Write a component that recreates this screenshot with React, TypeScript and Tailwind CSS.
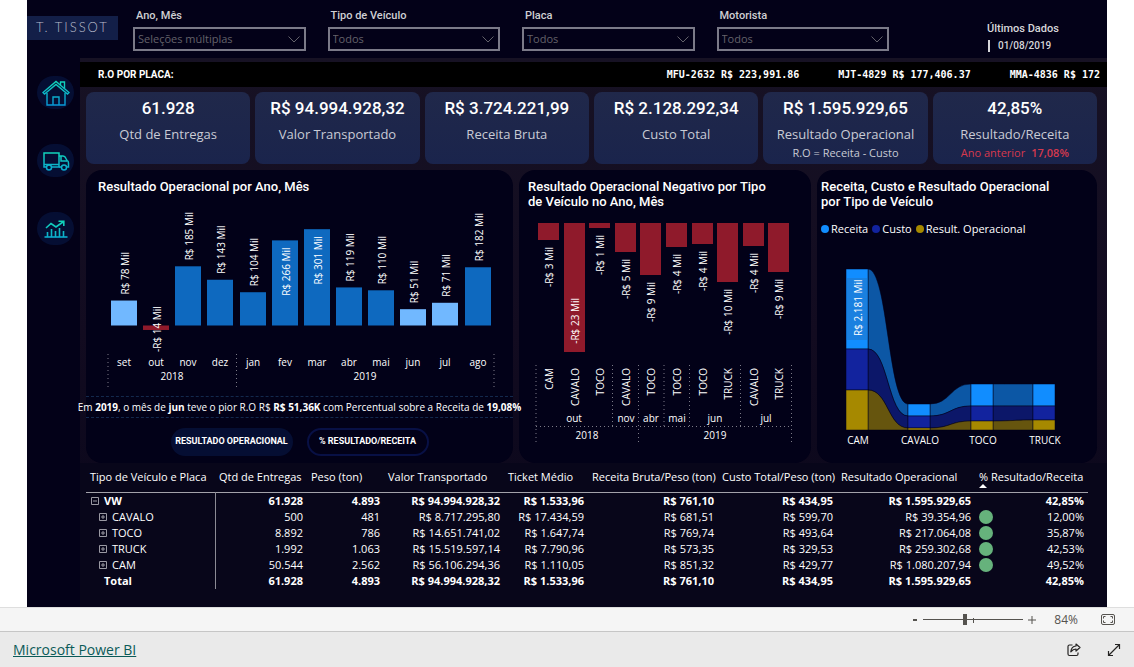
import React from 'react';

const filters = [
    { id: 'ano-mes', label: 'Ano, Mês', value: 'Seleções múltiplas' },
    { id: 'tipo', label: 'Tipo de Veículo', value: 'Todos' },
    { id: 'placa', label: 'Placa', value: 'Todos' },
    { id: 'motorista', label: 'Motorista', value: 'Todos' },
];

const ticker = ['MFU-2632 R$ 223,991.86', 'MJT-4829 R$ 177,406.37', 'MMA-4836 R$ 172'];

const kpis = [
    { value: '61.928', label: 'Qtd de Entregas' },
    { value: 'R$ 94.994.928,32', label: 'Valor Transportado' },
    { value: 'R$ 3.724.221,99', label: 'Receita Bruta' },
    { value: 'R$ 2.128.292,34', label: 'Custo Total' },
    { value: 'R$ 1.595.929,65', label: 'Resultado Operacional', note: 'R.O = Receita - Custo' },
    { value: '42,85%', label: 'Resultado/Receita', alert: 'Ano anterior', alertValue: '17,08%' },
];

const months = [
    { name: 'set', value: 78 },
    { name: 'out', value: -14 },
    { name: 'nov', value: 185 },
    { name: 'dez', value: 143 },
    { name: 'jan', value: 104 },
    { name: 'fev', value: 266 },
    { name: 'mar', value: 301 },
    { name: 'abr', value: 119 },
    { name: 'mai', value: 110 },
    { name: 'jun', value: 51 },
    { name: 'jul', value: 71 },
    { name: 'ago', value: 182 },
];

const negatives = [
    { type: 'CAM', value: 3, h: 17 },
    { type: 'CAVALO', value: 23, h: 129 },
    { type: 'TOCO', value: 1, h: 5 },
    { type: 'CAVALO', value: 5, h: 29 },
    { type: 'TOCO', value: 9, h: 52 },
    { type: 'TOCO', value: 4, h: 24 },
    { type: 'TOCO', value: 4, h: 21 },
    { type: 'TRUCK', value: 10, h: 59 },
    { type: 'CAVALO', value: 4, h: 23 },
    { type: 'TRUCK', value: 9, h: 49 },
];

const negativeMonths = [
    { name: 'out', x: 55 },
    { name: 'nov', x: 107 },
    { name: 'abr', x: 132 },
    { name: 'mai', x: 158 },
    { name: 'jun', x: 196 },
    { name: 'jul', x: 247 },
];

// top edge of each band, from Receita down to the base line
const ribbons = [
    { name: 'CAM', x: 29, y: [32, 112, 153, 193] },
    { name: 'CAVALO', x: 91, y: [167, 179, 191, 193] },
    { name: 'TOCO', x: 154, y: [147, 169, 184, 193] },
    { name: 'TRUCK', x: 216, y: [147, 169, 183, 193] },
];

const bands = [
    { name: 'Receita', solid: '#118dff', flow: '#0c57a5' },
    { name: 'Custo', solid: '#12239e', flow: '#0c1769' },
    { name: 'Result. Operacional', solid: '#a68900', flow: '#66550e' },
];

const columns = [
    { name: 'Tipo de Veículo e Placa', width: 129 },
    { name: 'Qtd de Entregas', width: 92 },
    { name: 'Peso (ton)', width: 77 },
    { name: 'Valor Transportado', width: 120 },
    { name: 'Ticket Médio', width: 84 },
    { name: 'Receita Bruta/Peso (ton)', width: 130 },
    { name: 'Custo Total/Peso (ton)', width: 119 },
    { name: 'Resultado Operacional', width: 138 },
    { name: '% Resultado/Receita', width: 113 },
];

const totals = ['61.928', '4.893', 'R$ 94.994.928,32', 'R$ 1.533,96', 'R$ 761,10', 'R$ 434,95', 'R$ 1.595.929,65', '42,85%'];

const rows = [
    { name: 'VW', kind: 'group', cells: totals },
    { name: 'CAVALO', kind: 'item', cells: ['500', '481', 'R$ 8.717.295,80', 'R$ 17.434,59', 'R$ 681,51', 'R$ 599,70', 'R$ 39.354,96', '12,00%'] },
    { name: 'TOCO', kind: 'item', cells: ['8.892', '786', 'R$ 14.651.741,02', 'R$ 1.647,74', 'R$ 769,74', 'R$ 493,64', 'R$ 217.064,08', '35,87%'] },
    { name: 'TRUCK', kind: 'item', cells: ['1.992', '1.063', 'R$ 15.519.597,14', 'R$ 7.790,96', 'R$ 573,35', 'R$ 329,53', 'R$ 259.302,68', '42,53%'] },
    { name: 'CAM', kind: 'item', cells: ['50.544', '2.562', 'R$ 56.106.294,36', 'R$ 1.110,05', 'R$ 851,32', 'R$ 429,77', 'R$ 1.080.207,94', '49,52%'] },
    { name: 'Total', kind: 'total', cells: totals },
];

const VerticalText: React.FC<{ x: number; y: number; anchor?: 'start' | 'end'; children: string }> = ({ x, y, anchor = 'start', children }) => (
    <text transform={`translate(${x} ${y}) rotate(-90)`} textAnchor={anchor} className="fill-white text-[10px]">
        {children}
    </text>
);

const NavIcons = [
    {
        label: 'Início',
        icon: (
            <svg viewBox="0 0 28 26" className="w-7 h-[26px]" fill="none" stroke="url(#nav-tint)" strokeWidth="1.4">
                <path d="M1 12.500 L14 1.500 L27 12.500 L25.500 14 L14 4.500 L2.500 14 Z" />
                <path d="M5 13 V25 H23 V13" />
                <path d="M11 25 V17 H17 V25" />
                <path d="M18.500 5 V2 H22.500 V8.500" />
            </svg>
        ),
    },
    {
        label: 'Entregas',
        icon: (
            <svg viewBox="0 0 28 20" className="w-7 h-5" fill="none" stroke="url(#nav-tint)" strokeWidth="1.500">
                <path d="M5 16 H2 V2 H17 V16 H9.500" />
                <path d="M2 13.500 H17" />
                <path d="M17 5 H21 Q23 5 24 7.500 L25 9.500 Q26.500 10 26.500 12 V16 H24.500 M20 16 H17" />
                <path d="M19 5 V10 H25" />
                <circle cx="7" cy="16.500" r="2.500" />
                <circle cx="22" cy="16.500" r="2.500" />
            </svg>
        ),
    },
    {
        label: 'Indicadores',
        icon: (
            <svg viewBox="0 0 24 18" className="w-6 h-[18px]" fill="none" stroke="url(#nav-tint)" strokeWidth="1.600">
                <path d="M0.500 17 H23.500" />
                <path d="M3.500 17 V12 M7.500 17 V9 M11.500 17 V11 M15.500 17 V8 M19.500 17 V11" />
                <path d="M2 8 L7 3.500 L12 7 L19 2" />
                <path d="M14.500 1.200 H19.800 V6" />
            </svg>
        ),
    },
];

const ResultChart: React.FC = () => (
    <svg viewBox="0 0 427 191" className="block w-full" role="img" aria-label="Resultado Operacional por Ano, Mês">
        {months.map((m, i) => {
            const x = 25 + Math.round(i * 32.14);
            const h = Math.abs(m.value) * 0.32;
            const top = m.value > 0 ? 120.5 - h : 120.5;
            const fill = m.value < 0 ? '#8f1a2b' : m.value < 100 ? '#71b8ff' : '#0e69bf';
            const inside = m.value > 200;
            return (
                <g key={m.name}>
                    <rect x={x} y={top} width="26" height={h} fill={fill} />
                    {m.value < 0 ? (
                        <VerticalText x={x + 18} y={147}>{`-R$ ${-m.value} Mil`}</VerticalText>
                    ) : (
                        <VerticalText x={x + 18} y={inside ? top + 7 : top - 6} anchor={inside ? 'end' : 'start'}>
                            {`R$ ${m.value} Mil`}
                        </VerticalText>
                    )}
                    <text x={x + 13} y="161" textAnchor="middle" className="fill-white text-[10px]">{m.name}</text>
                </g>
            );
        })}
        <text x="86" y="175" textAnchor="middle" className="fill-white text-[10px]">2018</text>
        <text x="279" y="175" textAnchor="middle" className="fill-white text-[10px]">2019</text>
        <path d="M22 149 V182 M150.500 149 V182 M408 149 V182" stroke="#7c7b87" strokeDasharray="1 3" fill="none" />
    </svg>
);

const NegativeChart: React.FC = () => (
    <svg viewBox="0 0 292 235" className="block w-full" role="img" aria-label="Resultado Operacional Negativo por Tipo de Veículo">
        {negatives.map((n, i) => {
            const x = 19 + Math.round(i * 25.6);
            return (
                <g key={i}>
                    <rect x={x} y="10" width="21" height={n.h} fill="#8f1a2b" />
                    <VerticalText x={x + 15} y={n.h > 100 ? n.h - 44 : n.h + 17} anchor="end">{`-R$ ${n.value} Mil`}</VerticalText>
                    <VerticalText x={x + 15} y={155} anchor="end">{n.type}</VerticalText>
                </g>
            );
        })}
        {negativeMonths.map((m) => (
            <text key={m.name} x={m.x} y="209" textAnchor="middle" className="fill-white text-[10px]">{m.name}</text>
        ))}
        <text x="68" y="226" textAnchor="middle" className="fill-white text-[10px]">2018</text>
        <text x="196" y="226" textAnchor="middle" className="fill-white text-[10px]">2019</text>
        <path
            d="M17 152 V232 M93.500 152 V213 M119.500 152 V232 M145 152 V213 M170.500 152 V213 M221.500 152 V213 M272.500 152 V232 M17 213.500 H273"
            stroke="#7c7b87"
            strokeDasharray="1 3"
            fill="none"
        />
    </svg>
);

const RibbonChart: React.FC = () => (
    <svg viewBox="0 0 280 222" className="block w-full" role="img" aria-label="Receita, Custo e Resultado Operacional por Tipo de Veículo">
        {bands.map((b, k) =>
            ribbons.slice(0, -1).map((r, i) => {
                const next = ribbons[i + 1];
                const x1 = r.x + 22;
                const x2 = next.x;
                const mid = (x1 + x2) / 2;
                return (
                    <path
                        key={`${b.name}-${r.name}`}
                        d={`M${x1} ${r.y[k]} C${mid} ${r.y[k]} ${mid} ${next.y[k]} ${x2} ${next.y[k]} V${next.y[k + 1]} C${mid} ${next.y[k + 1]} ${mid} ${r.y[k + 1]} ${x1} ${r.y[k + 1]} Z`}
                        fill={b.flow}
                        stroke="#02011a"
                        strokeWidth="0.500"
                    />
                );
            })
        )}
        {ribbons.map((r) => (
            <g key={r.name}>
                {bands.map((b, k) => (
                    <rect key={b.name} x={r.x} y={r.y[k]} width="22" height={r.y[k + 1] - r.y[k]} fill={b.solid} stroke="#02011a" strokeWidth="0.500" />
                ))}
                <text x={r.x + 12} y="207" textAnchor="middle" className="fill-white text-[10px]">{r.name}</text>
            </g>
        ))}
        <rect x="30" y="41" width="20" height="62" fill="#1a80e0" />
        <VerticalText x={45} y={99}>R$ 2.181 Mil</VerticalText>
    </svg>
);

const PanelTitle: React.FC<{ children: React.ReactNode }> = ({ children }) => (
    <h2 className="font-[Roboto,sans-serif] text-[13px] leading-[15px] font-medium">{children}</h2>
);

const App: React.FC = () => {
    return (
        <div className="min-h-screen flex flex-col bg-white font-['Open_Sans','Noto_Sans',sans-serif]">
            <main className="flex-1 mx-[27px] flex flex-col bg-[#030118] text-white">
                {/* Shared gradient for the nav icons */}
                <svg className="absolute w-0 h-0" aria-hidden="true">
                    <defs>
                        <linearGradient id="nav-tint" gradientUnits="userSpaceOnUse" x1="0" y1="0" x2="0" y2="26">
                            <stop offset="0" stopColor="#12d8b8" />
                            <stop offset="1" stopColor="#0796d8" />
                        </linearGradient>
                    </defs>
                </svg>

                <header className="h-[58px] flex items-start">
                    <div className="mt-4 w-[91px] h-6 bg-[#131f48] flex items-center justify-center font-[Lato,sans-serif] font-light text-[13px] tracking-[2px] text-[#b9bccb] whitespace-nowrap">
                        T. TISSOT
                    </div>
                    <div className="ml-[15px] flex-1 grid grid-cols-4 gap-[22px] pt-2">
                        {filters.map((f) => (
                            <div key={f.id} className="flex flex-col gap-1">
                                <label htmlFor={f.id} className="pl-[3px] font-[Roboto,sans-serif] text-[11px] leading-[15px] font-medium text-[#cfcfd3]">
                                    {f.label}
                                </label>
                                <div className="relative">
                                    <select id={f.id} className="block w-full h-6 appearance-none border-2 border-[#7b7a88] bg-transparent pl-[3px] pr-6 text-[11px] leading-4 text-[#63626a]">
                                        <option>{f.value}</option>
                                    </select>
                                    <svg viewBox="0 0 12 7" className="absolute right-[6px] top-[9px] w-3 h-[7px] pointer-events-none" fill="none" stroke="#63626a">
                                        <path d="M0.500 0.500 L6 6 L11.500 0.500" />
                                    </svg>
                                </div>
                            </div>
                        ))}
                    </div>
                    <div className="ml-[98px] w-[120px] pt-[21px] font-[Roboto,sans-serif] font-medium text-[#d6d6da]">
                        <p className="text-[11px] leading-4">Últimos Dados</p>
                        <p className="mt-[3px] ml-px border-l-2 border-[#d6d6da] pl-2 text-[10px] leading-3">01/08/2019</p>
                    </div>
                </header>

                <div className="flex-1 flex">
                    <nav className="w-[53px] shrink-0 pt-[18px] pl-[4px] flex flex-col items-center gap-[35px]">
                        {NavIcons.map((n) => (
                            <button key={n.label} type="button" aria-label={n.label} className="w-[37px] h-[33px] rounded-full bg-[#050e33] flex items-center justify-center">
                                {n.icon}
                            </button>
                        ))}
                    </nav>

                    <div className="flex-1 min-w-0 pt-1 bg-linear-to-b from-[#171224] via-[#120b20] to-[#08061a]">
                        <div className="h-[25px] pl-[18px] pr-[7px] bg-black flex items-center justify-between overflow-hidden whitespace-nowrap">
                            <span className="font-[Roboto,sans-serif] text-[10px] font-bold">R.O POR PLACA:</span>
                            <div className="flex gap-[39px] font-['DejaVu_Sans_Mono',monospace] text-[10px] font-bold">
                                {ticker.map((t) => (
                                    <span key={t}>{t}</span>
                                ))}
                            </div>
                        </div>

                        <div className="pl-[6px] pr-[10px] pt-[5px] flex flex-col gap-[6px]">
                            <section className="grid grid-cols-6 gap-[5px]">
                                {kpis.map((k) => (
                                    <div key={k.label} className="h-[72px] rounded-lg bg-linear-to-b from-[#20284a] to-[#1a244c] pt-[6px] text-center whitespace-nowrap">
                                        <p className="font-[Roboto,sans-serif] text-[17px] leading-5 font-medium">{k.value}</p>
                                        <p className="mt-[6px] text-[13px] leading-5 text-[#c9cbd5]">{k.label}</p>
                                        {k.note && <p className="text-[11px] leading-[18px] text-[#c9cbd5]">{k.note}</p>}
                                        {k.alert && (
                                            <p className="text-[11px] leading-[18px] text-[#d6394e]">
                                                {k.alert}
                                                <span className="ml-[6px] font-semibold">{k.alertValue}</span>
                                            </p>
                                        )}
                                    </div>
                                ))}
                            </section>

                            <section className="grid grid-cols-[427fr_292fr_280fr] gap-[6px]">
                                {/* Raised so the insight line can run a little past the panel edge */}
                                <article className="relative z-10 min-w-0 rounded-2xl bg-[#020118] pt-[9px] pb-[7px]">
                                    <div className="h-[26px] pl-3"><PanelTitle>Resultado Operacional por Ano, Mês</PanelTitle></div>
                                    <ResultChart />
                                    <p className="flex justify-center border-y border-dashed border-[#14294d] text-[10px] leading-5 whitespace-nowrap">
                                        <span>
                                            Em <b>2019</b>, o mês de <b>jun</b> teve o pior R.O R$ <b>R$ 51,36K</b> com Percentual sobre a Receita de <b>19,08%</b>
                                        </span>
                                    </p>
                                    <div className="mt-[10px] flex justify-center gap-[14px] font-[Roboto,sans-serif] text-[9px] font-bold">
                                        <button type="button" className="w-[122px] h-7 rounded-full bg-[#050e33] whitespace-nowrap">RESULTADO OPERACIONAL</button>
                                        <button type="button" className="w-[122px] h-7 rounded-full border-2 border-[#081045] whitespace-nowrap">% RESULTADO/RECEITA</button>
                                    </div>
                                </article>

                                <article className="min-w-0 rounded-2xl bg-[#020118] pt-[9px]">
                                    <div className="h-[34px] px-[9px]">
                                        <PanelTitle>Resultado Operacional Negativo por Tipo<br />de Veículo no Ano, Mês</PanelTitle>
                                    </div>
                                    <NegativeChart />
                                </article>

                                <article className="min-w-0 rounded-2xl bg-[#020118] pt-[9px]">
                                    <div className="px-1">
                                        <PanelTitle>Receita, Custo e Resultado Operacional<br />por Tipo de Veículo</PanelTitle>
                                        <ul className="mt-3 flex gap-1 text-[11px] leading-4">
                                            {bands.map((b) => (
                                                <li key={b.name} className="flex items-center gap-[2px] whitespace-nowrap">
                                                    <svg viewBox="0 0 8 8" className="w-2 h-2"><circle cx="4" cy="4" r="4" fill={b.solid} /></svg>
                                                    {b.name}
                                                </li>
                                            ))}
                                        </ul>
                                    </div>
                                    <RibbonChart />
                                </article>
                            </section>
                        </div>

                        <div className="pl-[6px] pr-[19px] pb-[18px] bg-[#08061a]">
                            <table className="w-full table-fixed border-collapse text-[11px] leading-4 whitespace-nowrap">
                                <colgroup>
                                    {columns.map((c) => (
                                        <col key={c.name} style={{ width: `${c.width / 10.02}%` }} />
                                    ))}
                                </colgroup>
                                <thead>
                                    <tr className="h-[29px] border-b border-[#a3a2aa]">
                                        {columns.map((c, i) => (
                                            <th key={c.name} scope="col" className="relative px-1 py-0 text-left font-normal">
                                                {c.name}
                                                {i === 8 && (
                                                    <svg viewBox="0 0 8 4" className="absolute left-1 bottom-1 w-2 h-1"><path d="M0 4 L4 0 L8 4 Z" fill="#fff" /></svg>
                                                )}
                                            </th>
                                        ))}
                                    </tr>
                                </thead>
                                <tbody>
                                    {rows.map((r) => (
                                        <tr key={r.name} className={r.kind === 'item' ? 'font-normal' : 'font-bold'}>
                                            <th scope="row" className={`border-r border-[#8b8a94] p-0 pl-[5px] text-left ${r.kind === 'item' ? 'font-normal' : 'font-bold'}`}>
                                                <span className={r.kind === 'item' ? 'flex items-center gap-[5px] pl-2' : 'flex items-center gap-[5px]'}>
                                                    {r.kind === 'total' ? (
                                                        <span className="w-2" />
                                                    ) : (
                                                        <svg viewBox="0 0 8 8" className="w-2 h-2" fill="none" stroke="#9a99a3">
                                                            <path d={r.kind === 'item' ? 'M0.500 0.500 H7.500 V7.500 H0.500 Z M2 4 H6 M4 2 V6' : 'M0.500 0.500 H7.500 V7.500 H0.500 Z M2 4 H6'} />
                                                        </svg>
                                                    )}
                                                    {r.name}
                                                </span>
                                            </th>
                                            {r.cells.map((c, i) => (
                                                <td key={i} className="px-1 py-0 text-right">
                                                    {i === 7 && r.kind === 'item' ? (
                                                        <span className="flex items-center justify-between">
                                                            <svg viewBox="0 0 14 14" className="w-[14px] h-[14px]"><circle cx="7" cy="7" r="7" fill="#66b27c" /></svg>
                                                            {c}
                                                        </span>
                                                    ) : (
                                                        c
                                                    )}
                                                </td>
                                            ))}
                                        </tr>
                                    ))}
                                </tbody>
                            </table>
                        </div>
                    </div>
                </div>
            </main>

            {/* Zoom bar */}
            <div className="h-6 pr-[19px] flex items-center justify-end border-t border-[#dedede] bg-[#f5f5f5] text-[#55534f]">
                <button type="button" aria-label="Reduzir" className="w-2 h-4 flex items-center justify-center">
                    <svg viewBox="0 0 4 2" className="w-1 h-[2px]"><path d="M0 1 H4" stroke="#55534f" strokeWidth="2" /></svg>
                </button>
                <div className="relative mx-1 w-[100px] h-3 flex items-center">
                    <input
                        type="range"
                        aria-label="Zoom"
                        min={0}
                        max={200}
                        defaultValue={84}
                        className="w-full h-px appearance-none bg-[#55534f] [&::-webkit-slider-thumb]:appearance-none [&::-webkit-slider-thumb]:w-1 [&::-webkit-slider-thumb]:h-[11px] [&::-webkit-slider-thumb]:bg-[#55534f]"
                    />
                    <span className="absolute left-1/2 top-1 w-px h-[5px] bg-[#55534f]" />
                </div>
                <button type="button" aria-label="Ampliar" className="ml-px w-2 h-4 flex items-center justify-center">
                    <svg viewBox="0 0 8 8" className="w-2 h-2"><path d="M0 4 H8 M4 0 V8" stroke="#55534f" /></svg>
                </button>
                <span className="w-[42px] text-right text-[12px] leading-4">84%</span>
                <button type="button" aria-label="Ajustar à página" className="ml-[23px]">
                    <svg viewBox="0 0 14 11" className="block w-[14px] h-[11px]" fill="none" stroke="#55534f">
                        <rect x="0.500" y="0.500" width="13" height="10" rx="1.500" />
                        <path d="M2.500 4.500 V2.500 H4.500 M9.500 2.500 H11.500 V4.500 M11.500 6.500 V8.500 H9.500 M4.500 8.500 H2.500 V6.500" />
                    </svg>
                </button>
            </div>

            <footer className="h-9 px-[13px] flex items-center border-t border-[#c6c6c6] bg-[#eaeaea]">
                <a href="#" className="text-[14px] leading-5 text-[#0a5a58] underline">Microsoft Power BI</a>
                <button type="button" aria-label="Compartilhar" className="ml-auto">
                    <svg viewBox="0 0 14 14" className="block w-[14px] h-[14px]" fill="none" stroke="#252423" strokeWidth="1.200" strokeLinejoin="round">
                        <path d="M5.500 2 H2.500 Q1 2 1 3.500 V11 Q1 12.500 2.500 12.500 H9.500 Q11 12.500 11 11 V9.500" />
                        <path d="M9 1 L13 4.500 L9 8 V6 Q6 6 3.800 8.800 Q4.300 3.500 9 3 Z" />
                    </svg>
                </button>
                <button type="button" aria-label="Tela inteira" className="ml-[26px]">
                    <svg viewBox="0 0 14 14" className="block w-[14px] h-[14px]" fill="none" stroke="#252423" strokeWidth="1.200">
                        <path d="M1.500 12.500 L12.500 1.500 M8 1.500 H12.500 V6 M1.500 8 V12.500 H6" />
                    </svg>
                </button>
            </footer>
        </div>
    );
};

export default App;
